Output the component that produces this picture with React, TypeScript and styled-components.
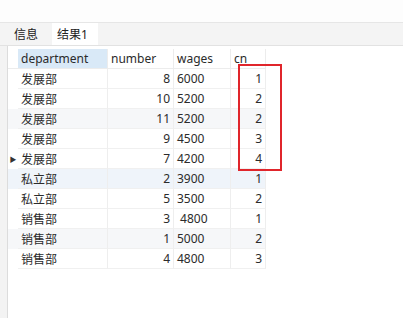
import styled, { createGlobalStyle } from "styled-components";

const GlobalStyle = createGlobalStyle`
    html, body {
        margin: 0;
        padding: 0;
        background: #ffffff;
        font-family: "Noto Sans", "Noto Sans CJK SC", sans-serif;
        color: #2b2b2b;
    }
`;

const rows = [
    { dept: "发展部", number: "8", wages: "6000", cn: "1", bg: "#ffffff" },
    { dept: "发展部", number: "10", wages: "5200", cn: "2", bg: "#ffffff" },
    { dept: "发展部", number: "11", wages: "5200", cn: "2", bg: "#f6f7f9" },
    { dept: "发展部", number: "9", wages: "4500", cn: "3", bg: "#ffffff" },
    { dept: "发展部", number: "7", wages: "4200", cn: "4", bg: "#ffffff", current: true },
    { dept: "私立部", number: "2", wages: "3900", cn: "1", bg: "#eff4fa" },
    { dept: "私立部", number: "5", wages: "3500", cn: "2", bg: "#ffffff" },
    { dept: "销售部", number: "3", wages: "\u00a04800", cn: "1", bg: "#ffffff" },
    { dept: "销售部", number: "1", wages: "5000", cn: "2", bg: "#f6f7f9" },
    { dept: "销售部", number: "4", wages: "4800", cn: "3", bg: "#ffffff" },
];

const Window = styled.div`
    width: 403px;
    height: 318px;
    overflow: hidden;
    display: flex;
    flex-direction: column;
    position: relative;
`;

const TopBar = styled.div`
    height: 22px;
    background: #fdfdfd;
    border-bottom: 1px solid #e6e6e6;
`;

const TabBar = styled.div`
    height: 22px;
    display: flex;
    align-items: stretch;
    background: #f4f4f4;
    border-bottom: 1px solid #e2e2e2;
`;

const Tab = styled.div<{ $active?: boolean }>`
    display: flex;
    align-items: center;
    white-space: nowrap;
    box-sizing: border-box;
    font-size: 12px;
    color: #222;
    width: ${(p) => (p.$active ? "46px" : "52px")};
    padding-left: ${(p) => (p.$active ? "5px" : "14px")};
    background: ${(p) => (p.$active ? "#ffffff" : "transparent")};
`;

const Body = styled.div`
    flex: 1;
    display: flex;
`;

const Gutter = styled.div`
    width: 7px;
    background: #f3f3f3;
    border-right: 1px solid #dcdcdc;
`;

const Grid = styled.div`
    padding-top: 3px;
    display: grid;
    grid-template-columns: 10px 90px 66px 57px 35px;
    grid-auto-rows: 20px;
    align-content: start;
`;

const Head = styled.div<{ $sorted?: boolean; $blank?: boolean }>`
    display: flex;
    align-items: center;
    padding-left: 3px;
    font-size: 12px;
    background: ${(p) => (p.$sorted ? "#d9e9f7" : "#ffffff")};
    border-right: ${(p) => (p.$blank ? "none" : "1px solid #ececec")};
    border-bottom: 1px solid #ececec;
`;

const Marker = styled.div<{ $bg: string }>`
    display: flex;
    align-items: center;
    justify-content: center;
    background: ${(p) => p.$bg};
    font-size: 7px;
    color: #333;
`;

const Cell = styled.div<{ $bg: string; $right?: boolean }>`
    display: flex;
    align-items: center;
    justify-content: ${(p) => (p.$right ? "flex-end" : "flex-start")};
    padding: ${(p) => (p.$right ? "0 3px 0 0" : "0 0 0 3px")};
    font-size: 12px;
    white-space: pre;
    background: ${(p) => p.$bg};
    border-right: 1px solid #eeeeee;
    border-bottom: 1px solid #f0f0f0;
`;

const Highlight = styled.div`
    position: absolute;
    left: 238px;
    top: 64px;
    width: 44px;
    height: 107px;
    box-sizing: border-box;
    border: 2px solid #e0252b;
`;

export default function App() {
    return (
        <Window>
            <GlobalStyle />
            <TopBar />
            <TabBar>
                <Tab>信息</Tab>
                <Tab $active>结果1</Tab>
            </TabBar>
            <Body>
                <Gutter />
                <Grid>
                    <Head $blank />
                    <Head $sorted>department</Head>
                    <Head>number</Head>
                    <Head>wages</Head>
                    <Head>cn</Head>
                    {rows.map((r, i) => [
                        <Marker key={`m${i}`} $bg={r.bg}>{r.current ? "▶" : ""}</Marker>,
                        <Cell key={`d${i}`} $bg={r.bg}>{r.dept}</Cell>,
                        <Cell key={`n${i}`} $bg={r.bg} $right>{r.number}</Cell>,
                        <Cell key={`w${i}`} $bg={r.bg}>{r.wages}</Cell>,
                        <Cell key={`c${i}`} $bg={r.bg} $right>{r.cn}</Cell>,
                    ])}
                </Grid>
            </Body>
            <Highlight />
        </Window>
    );
}
